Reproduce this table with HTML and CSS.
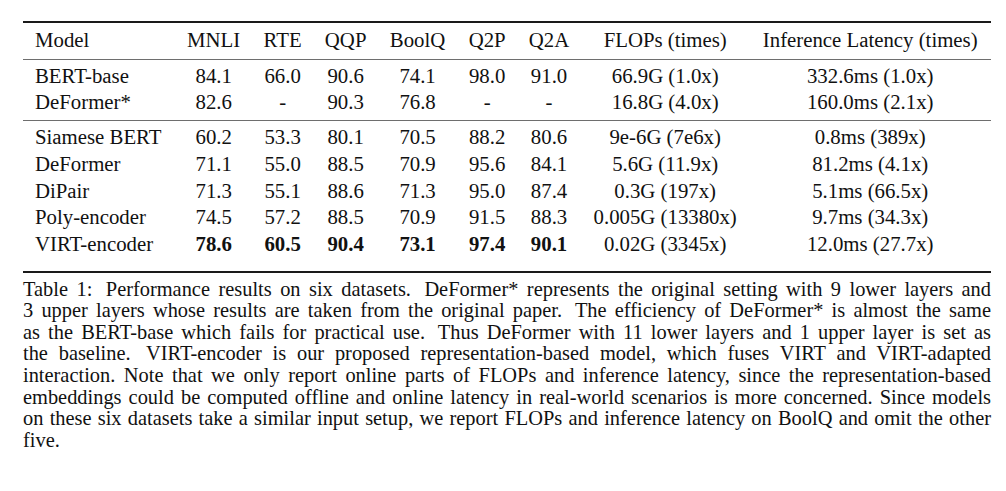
FILE: index.html
```html
<!DOCTYPE html>
<html>
<head>
<meta charset="utf-8">
<link rel="stylesheet" href="styles.css">
</head>
<body>
<div class="page">
  <table class="results">
    <thead>
      <tr>
        <th class="model">Model</th><th>MNLI</th><th>RTE</th><th>QQP</th><th>BoolQ</th><th>Q2P</th><th>Q2A</th><th>FLOPs (times)</th><th>Inference Latency (times)</th>
      </tr>
    </thead>
    <tbody class="g1">
      <tr><td class="model">BERT-base</td><td>84.1</td><td>66.0</td><td>90.6</td><td>74.1</td><td>98.0</td><td>91.0</td><td>66.9G (1.0x)</td><td>332.6ms (1.0x)</td></tr>
      <tr><td class="model">DeFormer*</td><td>82.6</td><td>-</td><td>90.3</td><td>76.8</td><td>-</td><td>-</td><td>16.8G (4.0x)</td><td>160.0ms (2.1x)</td></tr>
    </tbody>
    <tbody class="g2">
      <tr><td class="model">Siamese BERT</td><td>60.2</td><td>53.3</td><td>80.1</td><td>70.5</td><td>88.2</td><td>80.6</td><td>9e-6G (7e6x)</td><td>0.8ms (389x)</td></tr>
      <tr><td class="model">DeFormer</td><td>71.1</td><td>55.0</td><td>88.5</td><td>70.9</td><td>95.6</td><td>84.1</td><td>5.6G (11.9x)</td><td>81.2ms (4.1x)</td></tr>
      <tr><td class="model">DiPair</td><td>71.3</td><td>55.1</td><td>88.6</td><td>71.3</td><td>95.0</td><td>87.4</td><td>0.3G (197x)</td><td>5.1ms (66.5x)</td></tr>
      <tr><td class="model">Poly-encoder</td><td>74.5</td><td>57.2</td><td>88.5</td><td>70.9</td><td>91.5</td><td>88.3</td><td>0.005G (13380x)</td><td>9.7ms (34.3x)</td></tr>
      <tr><td class="model">VIRT-encoder</td><td class="best">78.6</td><td class="best">60.5</td><td class="best">90.4</td><td class="best">73.1</td><td class="best">97.4</td><td class="best">90.1</td><td>0.02G (3345x)</td><td>12.0ms (27.7x)</td></tr>
    </tbody>
  </table>
  <p class="caption">
    <span class="line">Table 1:<span class="ss"></span> Performance results on six datasets.<span class="ss"></span> DeFormer* represents the original setting with 9 lower layers and</span>
    <span class="line">3 upper layers whose results are taken from the original paper.<span class="ss"></span> The efficiency of DeFormer* is almost the same</span>
    <span class="line">as the BERT-base which fails for practical use.<span class="ss"></span> Thus DeFormer with 11 lower layers and 1 upper layer is set as</span>
    <span class="line">the baseline.<span class="ss"></span> VIRT-encoder is our proposed representation-based model, which fuses VIRT and VIRT-adapted</span>
    <span class="line">interaction. Note that we only report online parts of FLOPs and inference latency, since the representation-based</span>
    <span class="line">embeddings could be computed offline and online latency in real-world scenarios is more concerned. Since models</span>
    <span class="line">on these six datasets take a similar input setup, we report FLOPs and inference latency on BoolQ and omit the other</span>
    <span class="line last">five.</span>
  </p>
</div>
</body>
</html>
```
FILE: styles.css
```css
html, body {
  margin: 0;
  padding: 0;
  background: #ffffff;
}

body {
  font-family: "Liberation Serif", "Times New Roman", serif;
  color: #111111;
}

.page {
  width: 968px;
  padding: 21px 0 0 23px;
}

.results {
  width: 968px;
  border-collapse: collapse;
  font-size: 20.8px;
  line-height: 26.7px;
  border-top: 2px solid #1a1a1a;
  border-bottom: 2px solid #1a1a1a;
}

.results th,
.results td {
  padding: 0 11px;
  text-align: center;
  font-weight: normal;
  white-space: nowrap;
}

.results .model {
  text-align: left;
  padding-left: 12px;
}

.results .best {
  font-weight: bold;
}

.results thead th {
  padding-top: 4px;
  padding-bottom: 5px;
}

.results thead {
  border-bottom: 1.3px solid #6e6e6e;
}

.g1 {
  border-bottom: 1.3px solid #6e6e6e;
}

.g1 tr:first-child td,
.g2 tr:first-child td {
  padding-top: 3px;
}

.g1 tr:last-child td {
  padding-bottom: 4px;
}

.g2 tr:last-child td {
  padding-bottom: 13px;
}

.caption {
  margin: 6px 0 0 0;
  font-size: 20.4px;
  line-height: 21.6px;
  word-spacing: -1px;
}

.caption .line {
  display: block;
  text-align: justify;
  text-align-last: justify;
  white-space: nowrap;
}

.caption .line.last {
  text-align-last: left;
}

.caption .ss {
  display: inline-block;
  width: 5px;
}
```
